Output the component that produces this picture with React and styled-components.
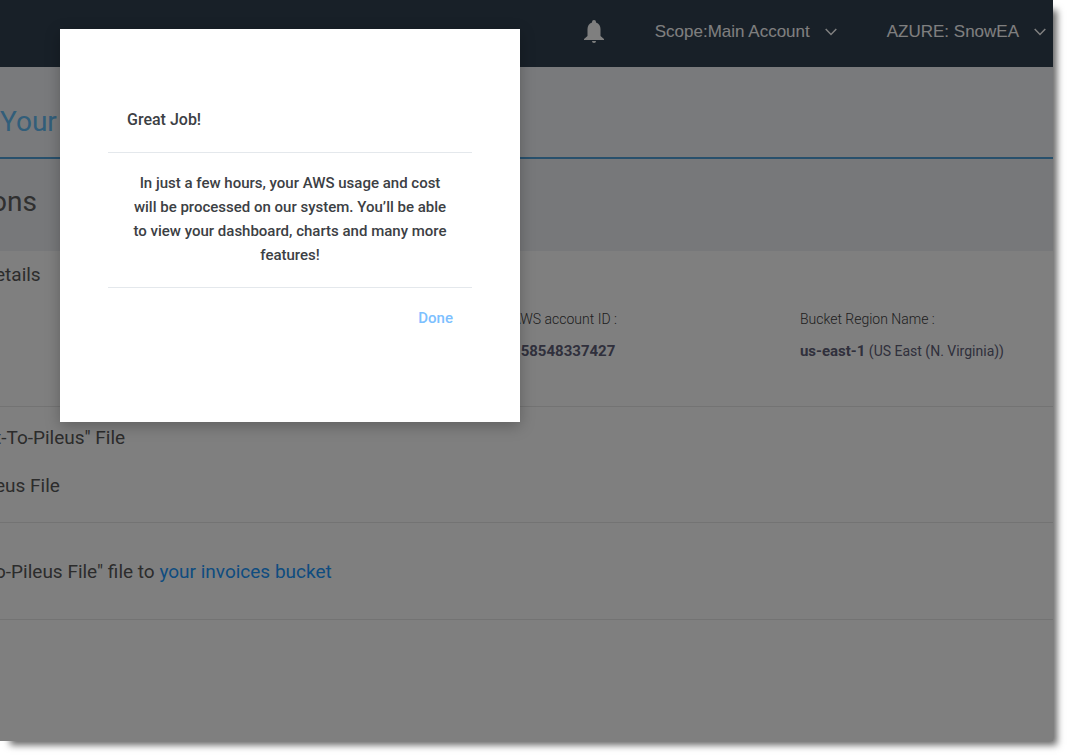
import React from "react";
import styled, { createGlobalStyle } from "styled-components";

const Global = createGlobalStyle`
  * { box-sizing: border-box; }
  html, body { margin: 0; background: #fff; }
  body { font-family: Roboto, "Liberation Sans", sans-serif; color: #303030; }
  h1, h2, h3, p, dl, dt, dd { margin: 0; font-weight: 400; }
  button { border: 0; padding: 0; background: none; font: inherit; color: inherit; cursor: pointer; }
`;

const Frame = styled.div`
  position: relative;
  margin: 0 15px 15px 0;
  min-height: calc(100vh - 15px);
  box-shadow: 7px 7px 7px -3px rgba(0, 0, 0, 0.6);
`;

const Page = styled.div`
  background: #fff;
  overflow: hidden;
`;

const TopBar = styled.header`
  display: flex;
  align-items: center;
  justify-content: flex-end;
  height: 67px;
  padding: 0 7px 4px 0;
  background: #304050;
  color: #fff;
  font-family: "Liberation Sans", Arial, sans-serif;
  font-size: 17px;
`;

const BellButton = styled.button`
  display: flex;
  margin-right: 51px;
`;

const Picker = styled.button`
  display: flex;
  align-items: center;
  gap: 15px;
  & + & { margin-left: 50px; }
`;

const Band = styled.div`
  height: 92px;
  padding-top: ${(p) => p.$top}px;
  background: ${(p) => p.$bg};
  border-bottom: ${(p) => p.$rule || "0"};
`;

const Title = styled.h1`
  font-size: 28px;
  line-height: 32px;
  color: #64bcf4;
`;

const Subtitle = styled.h2`
  margin-left: -9px;
  font-size: 28px;
  line-height: 32px;
  color: #606060;
`;

const Section = styled.section`
  height: ${(p) => p.$height}px;
  padding-top: ${(p) => p.$top}px;
  border-bottom: 1px solid #e6e6e6;
`;

const Step = styled.p`
  margin-left: -5px;
  font-size: 19px;
  line-height: 24px;
  color: #585858;
  & + & { margin-top: 24px; }
`;

const Link = styled.a`
  color: #2098ff;
  text-decoration: none;
`;

const Facts = styled.dl`
  display: flex;
  justify-content: flex-end;
  margin-top: 20px;
  padding-right: 49px;
`;

const Fact = styled.div`
  & + & { margin-left: 183px; }
`;

const FactName = styled.dt`
  font-size: 14px;
  font-weight: 300;
  line-height: 24px;
  color: #404040;
`;

const FactValue = styled.dd`
  margin-top: 8px;
  font-size: 14px;
  line-height: 24px;
  color: #606078;
  b { font-size: 15px; }
`;

const Overlay = styled.div`
  position: absolute;
  inset: 0;
  padding: 29px 60px;
  background: rgba(0, 0, 0, 0.5);
`;

const Dialog = styled.div`
  width: 460px;
  max-width: 100%;
  padding: 66px 48px 92px;
  background: #fff;
  box-shadow: 0 4px 14px rgba(0, 0, 0, 0.25);
  color: #3c4044;
  font-size: 15px;
  font-weight: 500;
  line-height: 24px;
`;

const DialogTitle = styled.h3`
  && { font-weight: 500; }
  padding: 13px 19px 20px;
  font-size: 16px;
`;

const DialogText = styled.p`
  && { font-weight: 500; }
  padding: 18px 19px 20px;
  border: 1px solid #e4e8ec;
  border-width: 1px 0;
  text-align: center;
`;

const DialogFooter = styled.div`
  display: flex;
  justify-content: flex-end;
  padding: 18px 19px 0;
`;

const DoneButton = styled.button`
  color: #7cc0ff;
`;

const Bell = () => (
  <svg width="20" height="24" viewBox="0 0 20 24" fill="#fff" aria-hidden="true">
    <path d="M10 0a2 2 0 0 0-2 2v.4C5 3.300 3.500 6 3.500 9v7L0 19v1h20v-1l-3.500-3V9c0-3-1.500-5.700-4.500-6.600V2a2 2 0 0 0-2-2z" />
    <path d="M8 21h4a2 2 0 0 1-4 0z" />
  </svg>
);

const Chevron = () => (
  <svg width="12" height="8" viewBox="0 0 12 8" fill="none" stroke="#fff" strokeWidth="1.500" aria-hidden="true">
    <path d="M.7 1l5.300 5.500L11.300 1" />
  </svg>
);

export default function App() {
  return (
    <Frame>
      <Global />
      <Page>
        <TopBar>
          <BellButton aria-label="Notifications"><Bell /></BellButton>
          <Picker>Scope:Main Account<Chevron /></Picker>
          <Picker>AZURE: SnowEA<Chevron /></Picker>
        </TopBar>
        <Band $top={39} $bg="#f3f5f8" $rule="2px solid #50a0d8">
          <Title>Your</Title>
        </Band>
        <Band $top={27} $bg="#eff1f5">
          <Subtitle>ons</Subtitle>
        </Band>
        <Section $height={156} $top={12}>
          <Step>etails</Step>
          <Facts>
            <Fact>
              <FactName>AWS account ID :</FactName>
              <FactValue><b>158548337427</b></FactValue>
            </Fact>
            <Fact>
              <FactName>Bucket Region Name :</FactName>
              <FactValue><b>us-east-1</b> (US East (N. Virginia))</FactValue>
            </Fact>
          </Facts>
        </Section>
        <Section $height={116} $top={19}>
          <Step>t-To-Pileus" File</Step>
          <Step>eus File</Step>
        </Section>
        <Section $height={97} $top={37}>
          <Step>o-Pileus File" file to <Link href="#bucket">your invoices bucket</Link></Step>
        </Section>
      </Page>
      <Overlay>
        <Dialog role="dialog" aria-modal="true" aria-labelledby="dialog-title">
          <DialogTitle id="dialog-title">Great Job!</DialogTitle>
          <DialogText>
            In just a few hours, your AWS usage and cost will be processed on our
            system. You’ll be able to view your dashboard, charts and many more
            features!
          </DialogText>
          <DialogFooter><DoneButton>Done</DoneButton></DialogFooter>
        </Dialog>
      </Overlay>
    </Frame>
  );
}
